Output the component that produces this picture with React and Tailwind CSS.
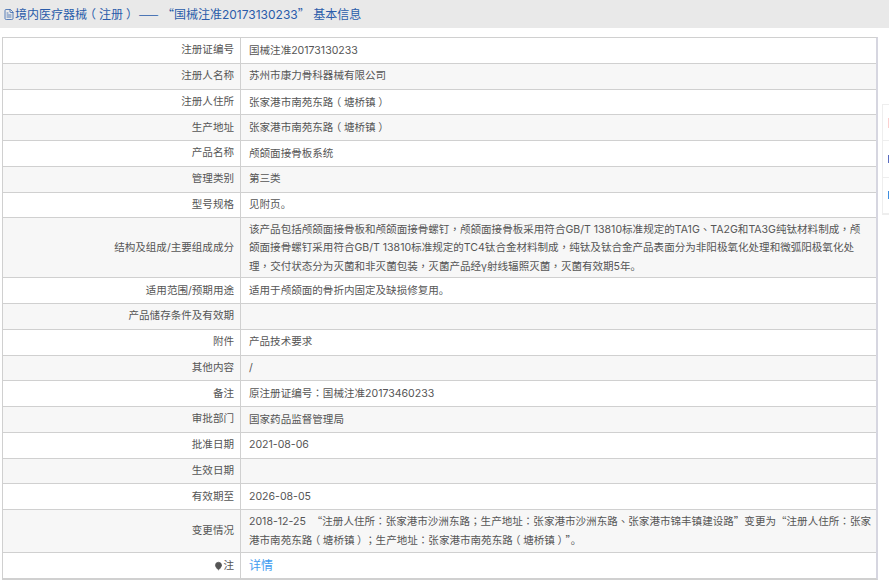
import { FileText, MapPin } from 'lucide-react';

const rows = [
  ['注册证编号', '国械注准20173130233'],
  ['注册人名称', '苏州市康力骨科器械有限公司'],
  ['注册人住所', '张家港市南苑东路（塘桥镇）'],
  ['生产地址', '张家港市南苑东路（塘桥镇）'],
  ['产品名称', '颅颌面接骨板系统'],
  ['管理类别', '第三类'],
  ['型号规格', '见附页。'],
  ['结构及组成/主要组成成分', [
    '该产品包括颅颌面接骨板和颅颌面接骨螺钉，颅颌面接骨板采用符合GB/T 13810标准规定的TA1G、TA2G和TA3G纯钛材料制成，颅',
    '颌面接骨螺钉采用符合GB/T 13810标准规定的TC4钛合金材料制成，纯钛及钛合金产品表面分为非阳极氧化处理和微弧阳极氧化处',
    '理，交付状态分为灭菌和非灭菌包装，灭菌产品经γ射线辐照灭菌，灭菌有效期5年。',
  ], 'h-[60px]'],
  ['适用范围/预期用途', '适用于颅颌面的骨折内固定及缺损修复用。'],
  ['产品储存条件及有效期', ''],
  ['附件', '产品技术要求'],
  ['其他内容', '/'],
  ['备注', '原注册证编号：国械注准20173460233'],
  ['审批部门', '国家药品监督管理局'],
  ['批准日期', '2021-08-06'],
  ['生效日期', ''],
  ['有效期至', '2026-08-05'],
  ['变更情况', [
    '2018-12-25  “注册人住所：张家港市沙洲东路；生产地址：张家港市沙洲东路、张家港市锦丰镇建设路”变更为“注册人住所：张家',
    '港市南苑东路（塘桥镇）；生产地址：张家港市南苑东路（塘桥镇）”。',
  ], 'h-[43px]'],
];

// punctuation is centred in its box in the reference: TC cut for most, half-width plus margin for brackets
function Punct({ text }) {
  return text.split(/([，；：、“”—（）])/).map((part, i) => {
    if (i % 2 === 0) return part;
    if (part === '（' || part === '）') {
      return <span key={i} className="mx-[0.25em] [font-feature-settings:'halt'] font-['Noto_Sans_CJK_SC',sans-serif]">{part}</span>;
    }
    return <span key={i} className="font-['Noto_Sans_CJK_TC',sans-serif]">{part}</span>;
  });
}

export default function App() {
  return (
    <div className="w-[889px] h-[586px] overflow-hidden bg-white relative font-['Inter','Noto_Sans_CJK_SC',sans-serif] text-[10.55px] text-[#555]">
      <div className="h-[28px] bg-[#e9e9e9] flex items-center pl-[3px] text-[12px] text-[#2a5caa]">
        <FileText className="w-[12px] h-[13px] text-[#2a5caa]" strokeWidth={1.5} />
        <span className="whitespace-pre"><Punct text="境内医疗器械（注册） —— “国械注准20173130233” 基本信息" /></span>
      </div>
      <div className="w-[876px] mt-[9px] ml-[2px] border-2 border-[#d0d0d0] border-t-[1px] border-l-[1px] border-r-[#d6d6e0]">
        {rows.map(([label, value, height], i) => {
          const lines = Array.isArray(value) ? value : [value];
          return (
            <div key={label} className={`flex border-b border-[#d0d0d0] ${height || 'h-[25.75px]'} ${i % 2 ? 'bg-[#f7f7f7]' : 'bg-white'}`}>
              <div className="w-[238px] shrink-0 flex items-center justify-end pr-[6px] border-r border-[#d0d0d0]">{label}</div>
              <div className="flex-1 flex flex-col justify-center pl-[8px] leading-[17.6px]">
                {value && lines.map((line) => (
                  <div key={line} className="whitespace-pre"><Punct text={line} /></div>
                ))}
              </div>
            </div>
          );
        })}
        <div className="flex h-[25px]">
          <div className="w-[238px] shrink-0 flex items-center justify-end pr-[6px] border-r border-[#d0d0d0]">
            <MapPin className="w-[9px] h-[10px] fill-[#555] text-[#555]" />注
          </div>
          <div className="flex-1 flex items-center pl-[8px] text-[12px] text-[#3f9bf0]">详情</div>
        </div>
      </div>
      <div className="absolute left-[882px] top-[104px] w-[7px] h-[111px] border border-[#eee] border-r-0 bg-white flex flex-col">
        <div className="flex-1 flex items-center pl-[5px] border-b border-[#eee]"><div className="w-[1px] h-[10px] bg-[#fbd0d0]" /></div>
        <div className="flex-1 flex items-center pl-[5px] border-b border-[#eee]"><div className="w-[1px] h-[8px] bg-[#5a6cc0]" /></div>
        <div className="flex-1 flex items-center pl-[5px] border-b border-[#eee]"><div className="w-[1px] h-[8px] bg-[#3f8fe0]" /></div>
      </div>
    </div>
  );
}
